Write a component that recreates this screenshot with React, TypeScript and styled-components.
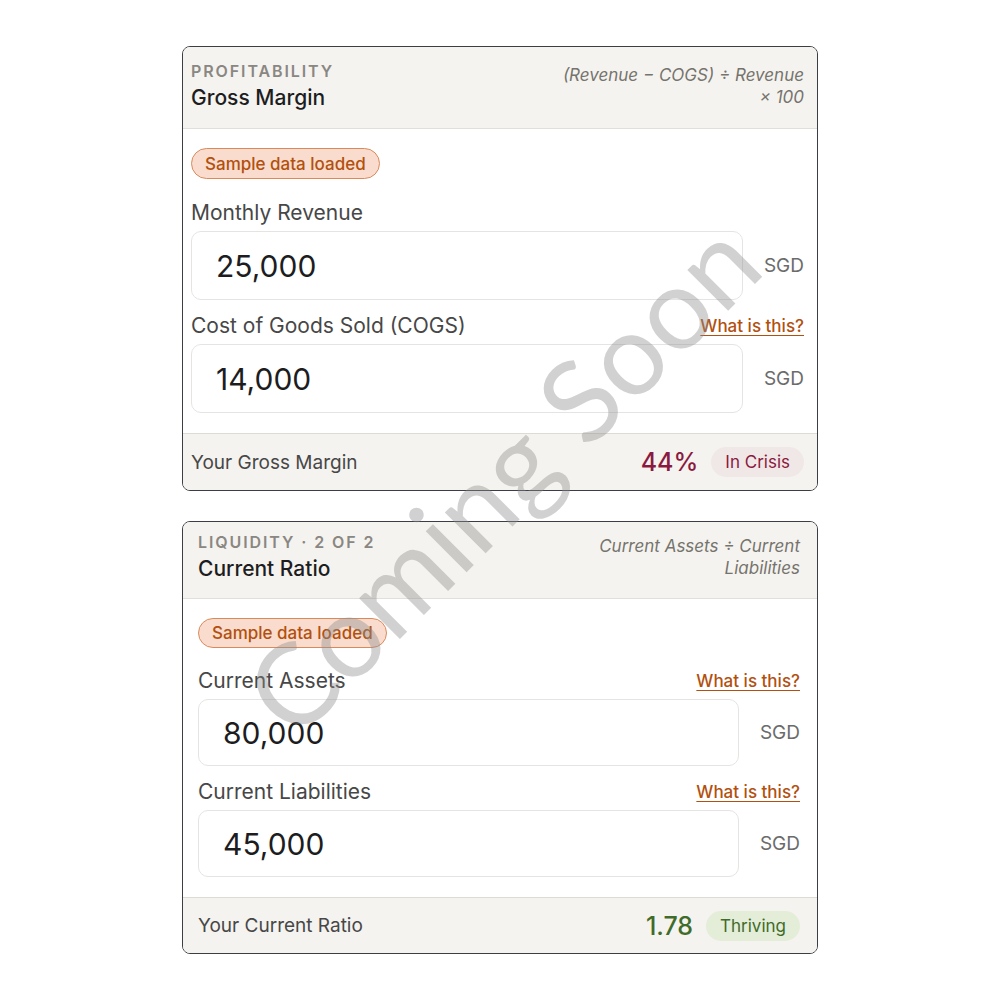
import React from 'react';
import styled, {createGlobalStyle} from 'styled-components';

type Tone = 'crisis' | 'thriving';

type Field = {
    label: string;
    value: string;
    help?: boolean;
};

type Metric = {
    eyebrow: string;
    title: string;
    formula: string;
    fields: Field[];
    resultLabel: string;
    result: string;
    status: string;
    tone: Tone;
    padLeft: number;
    padRight: number;
    compact?: boolean;
};

const metrics: Metric[] = [
    {
        eyebrow: 'Profitability',
        title: 'Gross Margin',
        formula: '(Revenue − COGS) ÷ Revenue ×\u00a0100',
        fields: [
            {label: 'Monthly Revenue', value: '25,000'},
            {label: 'Cost of Goods Sold (COGS)', value: '14,000', help: true},
        ],
        resultLabel: 'Your Gross Margin',
        result: '44%',
        status: 'In Crisis',
        tone: 'crisis',
        padLeft: 8,
        padRight: 13,
    },
    {
        eyebrow: 'Liquidity · 2 of 2',
        title: 'Current Ratio',
        formula: 'Current Assets ÷ Current Liabilities',
        fields: [
            {label: 'Current Assets', value: '80,000', help: true},
            {label: 'Current Liabilities', value: '45,000', help: true},
        ],
        resultLabel: 'Your Current Ratio',
        result: '1.78',
        status: 'Thriving',
        tone: 'thriving',
        padLeft: 15,
        padRight: 17,
        compact: true,
    },
];

const toneColors = {
    crisis: {text: '#8a1a3f', bg: '#f0e8e7'},
    thriving: {text: '#3f6b2b', bg: '#e4edd7'},
};

const MetricCard: React.FC<{metric: Metric}> = ({metric}) => {
    const c = metric.compact;
    return (
        <StyledCard>
            <StyledHeader $l={metric.padLeft} $r={metric.padRight} $compact={c}>
                <StyledTitleBlock>
                    <StyledEyebrow>{metric.eyebrow}</StyledEyebrow>
                    <StyledTitle>{metric.title}</StyledTitle>
                </StyledTitleBlock>
                <StyledFormula>{metric.formula}</StyledFormula>
            </StyledHeader>

            <StyledBody $l={metric.padLeft} $r={metric.padRight} $compact={c}>
                <StyledSampleBadge $compact={c}>Sample data loaded</StyledSampleBadge>
                {metric.fields.map(f => (
                    <StyledField key={f.label}>
                        <StyledLabelRow>
                            <StyledLabel>{f.label}</StyledLabel>
                            {f.help && <StyledHelp href="#">What is this?</StyledHelp>}
                        </StyledLabelRow>
                        <StyledInputRow>
                            <StyledInput $compact={c} readOnly value={f.value}/>
                            <StyledUnit>SGD</StyledUnit>
                        </StyledInputRow>
                    </StyledField>
                ))}
            </StyledBody>

            <StyledFooter $l={metric.padLeft} $r={metric.padRight} $compact={c}>
                <StyledResultLabel>{metric.resultLabel}</StyledResultLabel>
                <StyledResult>
                    <StyledResultValue $tone={metric.tone}>{metric.result}</StyledResultValue>
                    <StyledStatus $tone={metric.tone}>{metric.status}</StyledStatus>
                </StyledResult>
            </StyledFooter>
        </StyledCard>
    );
};

export default function App() {
    return (
        <>
            <GlobalStyle/>
            <StyledPage>
                {metrics.map(m => <MetricCard key={m.title} metric={m}/>)}
            </StyledPage>
            <StyledWatermark>Coming Soon</StyledWatermark>
        </>
    );
}

const GlobalStyle = createGlobalStyle`
  * { box-sizing: border-box; }
  html, body {
    margin: 0;
    padding: 0;
    background: #ffffff;
    font-family: Inter, "Noto Sans", sans-serif;
  }
`
const StyledPage = styled.div`
  width: 636px;
  margin: 0 auto;
  padding-top: 46px;
  display: flex;
  flex-direction: column;
  gap: 30px;
`
const StyledCard = styled.section`
  border: 1px solid #3b3f45;
  border-radius: 8px;
  overflow: hidden;
  background: #ffffff;
`
type PadProps = {$l: number; $r: number; $compact?: boolean};

const StyledHeader = styled.header<PadProps>`
  display: flex;
  justify-content: space-between;
  align-items: flex-start;
  background: #f5f3ef;
  border-bottom: 1px solid #e2dfda;
  padding: ${p => p.$compact ? '10px' : '14px'} ${p => p.$r}px ${p => p.$compact ? '16px' : '17px'} ${p => p.$l}px;
`
const StyledTitleBlock = styled.div`
  display: flex;
  flex-direction: column;
  gap: 4px;
`
const StyledEyebrow = styled.div`
  font-size: 16px;
  line-height: 20px;
  font-weight: 600;
  letter-spacing: 1.9px;
  text-transform: uppercase;
  color: #8a8782;
`
const StyledTitle = styled.h2`
  margin: 0;
  font-size: 21px;
  line-height: 26px;
  font-weight: 500;
  color: #1d1d1f;
`
const StyledFormula = styled.div`
  max-width: 250px;
  padding-top: 3px;
  text-align: right;
  font-size: 17px;
  line-height: 22px;
  font-style: italic;
  color: #76736e;
`
const StyledBody = styled.div<PadProps>`
  display: flex;
  flex-direction: column;
  align-items: stretch;
  gap: 13px;
  padding: 19px ${p => p.$r}px 20px ${p => p.$l}px;
`
const StyledSampleBadge = styled.span<{$compact?: boolean}>`
  align-self: flex-start;
  height: ${p => p.$compact ? '30px' : '31px'};
  margin-bottom: ${p => p.$compact ? '7px' : '8px'};
  display: inline-flex;
  align-items: center;
  padding: 0 13px;
  border-radius: 999px;
  background: #f9dccd;
  border: 1px solid #d98a5d;
  color: #b2500f;
  font-size: 17px;
  font-weight: 500;
`
const StyledField = styled.div`
  display: flex;
  flex-direction: column;
  gap: 5px;
`
const StyledLabelRow = styled.div`
  height: 26px;
  display: flex;
  justify-content: space-between;
  align-items: center;
`
const StyledLabel = styled.label`
  font-size: 21px;
  line-height: 26px;
  color: #474747;
`
const StyledHelp = styled.a`
  font-size: 17px;
  font-weight: 500;
  color: #b2500f;
  text-decoration: underline;
  text-underline-offset: 3px;
`
const StyledInputRow = styled.div`
  display: flex;
  align-items: center;
  gap: 21px;
`
const StyledInput = styled.input<{$compact?: boolean}>`
  flex: 1;
  min-width: 0;
  height: ${p => p.$compact ? '67px' : '69px'};
  padding: 0 24px;
  border: 1px solid #e6e4e1;
  border-radius: 10px;
  background: #ffffff;
  font-family: inherit;
  font-size: 30px;
  color: #1d1d1f;
  outline: none;
`
const StyledUnit = styled.span`
  text-align: right;
  font-size: 19px;
  color: #6b6b6b;
`
const StyledFooter = styled.footer<PadProps>`
  display: flex;
  justify-content: space-between;
  align-items: center;
  height: ${p => p.$compact ? '56px' : '57px'};
  background: #f5f3ef;
  border-top: 1px solid #dedbd6;
  padding: 0 ${p => p.$r}px 0 ${p => p.$l}px;
`
const StyledResultLabel = styled.span`
  font-size: 19px;
  color: #474747;
`
const StyledResult = styled.div`
  display: flex;
  align-items: center;
  gap: 13px;
`
const StyledResultValue = styled.span<{$tone: Tone}>`
  font-size: 25px;
  font-weight: 500;
  color: ${p => toneColors[p.$tone].text};
`
const StyledStatus = styled.span<{$tone: Tone}>`
  height: 30px;
  display: inline-flex;
  align-items: center;
  padding: 0 14px;
  border-radius: 999px;
  font-size: 17px;
  color: ${p => toneColors[p.$tone].text};
  background: ${p => toneColors[p.$tone].bg};
`
const StyledWatermark = styled.div`
  position: absolute;
  left: 500px;
  top: 476px;
  transform: translate(-50%, -50%) rotate(-45deg);
  font-family: Lato, "Open Sans", sans-serif;
  font-size: 114px;
  font-weight: 400;
  white-space: nowrap;
  color: rgba(140, 140, 140, 0.4);
  pointer-events: none;
  user-select: none;
`
